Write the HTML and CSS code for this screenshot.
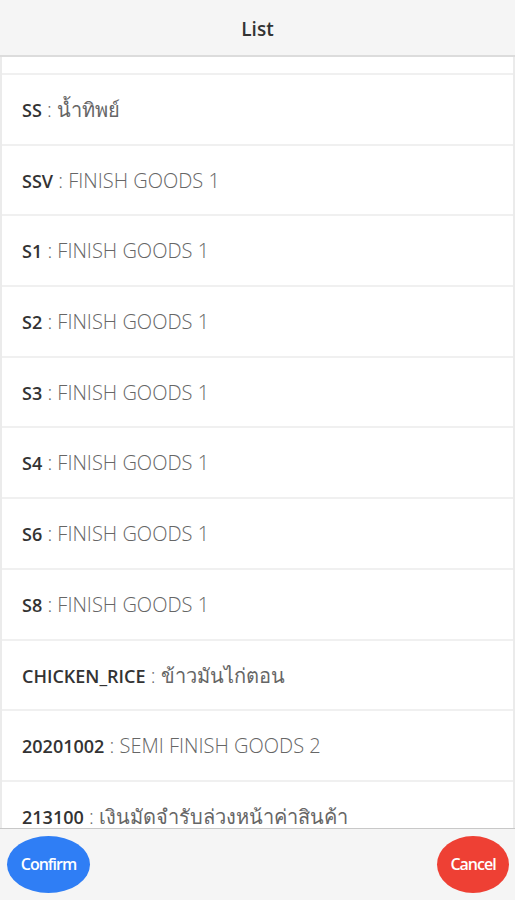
FILE: index.html
```html
<!DOCTYPE html>
<html>

<head>
    <title>List</title>
    <link rel="stylesheet" href="styles.css">
</head>

<body>
    <div id="page">
        <div class="header">List</div>
        <div class="list">
            <div class="row top"></div>
            <div class="row"><b>SS</b> : น้ำทิพย์</div>
            <div class="row"><b>SSV</b> : FINISH GOODS 1</div>
            <div class="row"><b>S1</b> : FINISH GOODS 1</div>
            <div class="row"><b>S2</b> : FINISH GOODS 1</div>
            <div class="row"><b>S3</b> : FINISH GOODS 1</div>
            <div class="row"><b>S4</b> : FINISH GOODS 1</div>
            <div class="row"><b>S6</b> : FINISH GOODS 1</div>
            <div class="row"><b>S8</b> : FINISH GOODS 1</div>
            <div class="row"><b>CHICKEN_RICE</b> : ข้าวมันไก่ตอน</div>
            <div class="row"><b>20201002</b> : SEMI FINISH GOODS 2</div>
            <div class="row"><b>213100</b> : เงินมัดจำรับล่วงหน้าค่าสินค้า</div>
        </div>
        <div class="footer">
            <a href="javascript:;" class="btn confirm">Confirm</a>
            <a href="javascript:;" class="btn cancel">Cancel</a>
        </div>
    </div>
</body>

</html>
```

FILE: styles.css
```css
* {
    margin: 0;
    padding: 0;
    text-decoration: none;
    box-sizing: border-box;
}

body {
    font-family: "Open Sans", "Noto Sans", "Noto Sans CJK SC", sans-serif;
    background-color: #fff;
}

#page {
    width: 515px;
    height: 900px;
    display: flex;
    flex-direction: column;
}

.header {
    height: 57px;
    background-color: #f5f5f5;
    border-bottom: 2px solid #dcdcdc;
    text-align: center;
    line-height: 59px;
    font-size: 19px;
    font-weight: 600;
    color: #333;
}

.list {
    flex: 1;
    overflow: hidden;
    border-left: 2px solid #ebebeb;
    border-right: 2px solid #ebebeb;
}

.row {
    height: 70.7px;
    line-height: 70px;
    padding-left: 20px;
    border-bottom: 2px solid #f0f0f0;
    font-size: 20px;
    font-weight: 300;
    color: #666;
    white-space: nowrap;
}

.row.top {
    height: 18px;
}

.row b {
    font-weight: 600;
    font-size: 18px;
    color: #333;
}

.footer {
    height: 72px;
    background-color: #f5f5f5;
    border-top: 1px solid #c8c8c8;
    display: flex;
    justify-content: space-between;
    align-items: center;
    padding: 0 6px 0 7px;
}

.btn {
    display: block;
    height: 57px;
    line-height: 57px;
    border-radius: 50%;
    color: #fff;
    text-align: center;
    font-size: 16px;
    font-weight: 600;
    letter-spacing: -1px;
}

.confirm {
    width: 83px;
    background-color: #2f7ef5;
}

.cancel {
    width: 72px;
    background-color: #ee4034;
}
```
